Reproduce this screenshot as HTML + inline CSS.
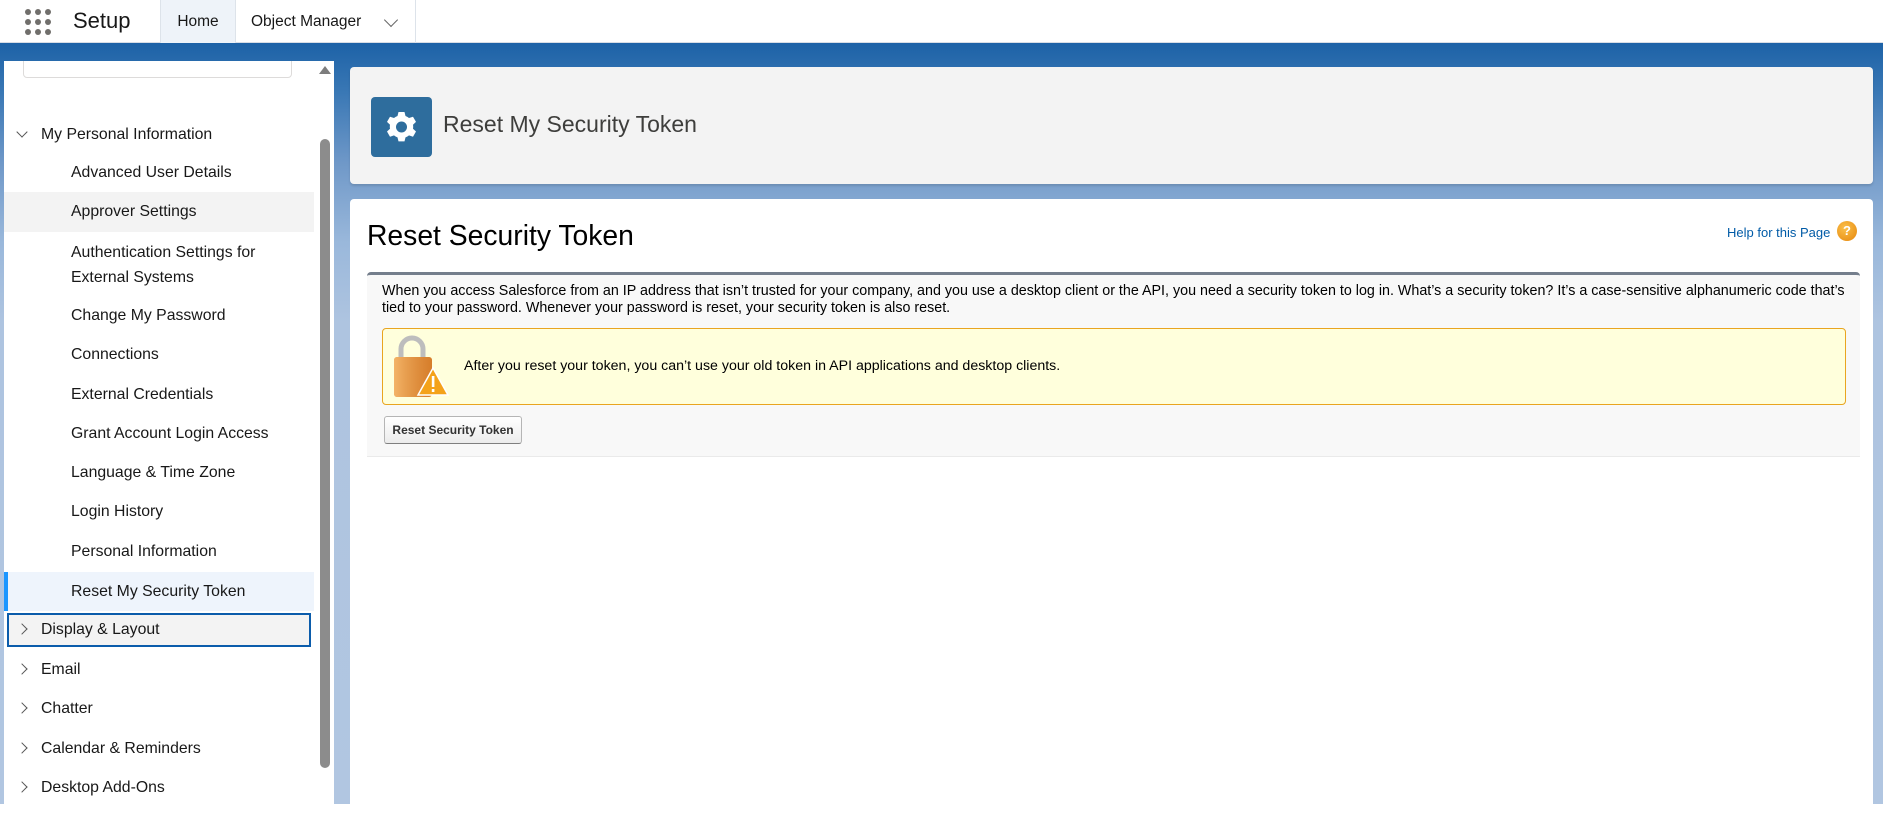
<!DOCTYPE html>
<html><head><meta charset="utf-8"><style>
*{box-sizing:border-box;margin:0;padding:0}
body{width:1883px;height:804px;overflow:hidden;position:relative;font-family:"Liberation Sans",Arial,sans-serif;background:#fff}
.top{position:absolute;left:0;top:0;width:1883px;height:43px;background:#fff;border-bottom:1px solid #d8dde6}
.bg{position:absolute;left:0;top:43px;width:1883px;height:761px;background:linear-gradient(180deg,#1d62a7 0px,#3a78b5 50px,#6f98c8 120px,#9ab8db 200px,#aec4e0 280px,#b1c6e1 761px)}
.side{position:absolute;left:4px;top:61px;width:311px;height:743px;background:#fff;overflow:hidden}
.sb{position:absolute;left:314px;top:61px;width:20px;height:743px;background:#fff}
.thumb{position:absolute;left:320px;top:139px;width:10px;height:629px;background:#8c8c8c;border-radius:5px}
.it{position:absolute;left:0;width:311px;font-size:15.8px;color:#181818;font-family:"Liberation Sans","DejaVu Sans",sans-serif}
.sub{padding-left:67px}
.lvl{padding-left:37px}
.chev{position:absolute;left:14px;top:50%;margin-top:-5px;width:8px;height:8px;border-right:1.5px solid #555;border-bottom:1.5px solid #555;transform:rotate(-45deg)}
.chev.dn{transform:rotate(45deg);margin-top:-7px}
.card{position:absolute;left:350px;width:1523px;border-radius:4px}
</style></head><body>
<div class="top">
 <svg style="position:absolute;left:24px;top:8px" width="28" height="28" viewBox="0 0 28 28" fill="#706e6b"><circle cx="4" cy="4" r="3"/><circle cx="14" cy="4" r="3"/><circle cx="24" cy="4" r="3"/><circle cx="4" cy="14" r="3"/><circle cx="14" cy="14" r="3"/><circle cx="24" cy="14" r="3"/><circle cx="4" cy="24" r="3"/><circle cx="14" cy="24" r="3"/><circle cx="24" cy="24" r="3"/></svg>
 <div style="position:absolute;left:73px;top:8px;font-size:22px;color:#181818;font-family:'Liberation Sans',sans-serif">Setup</div>
 <div style="position:absolute;left:160px;top:0;width:76px;height:43px;background:#eef3f9;border-left:1px solid #dde3ea;border-right:1px solid #dde3ea;font-size:15.5px;line-height:43px;text-align:center;color:#181818">Home</div>
 <div style="position:absolute;left:236px;top:0;width:180px;height:43px;border-right:1px solid #dde3ea;font-size:15.5px;line-height:43px;padding-left:15px;color:#181818">Object Manager</div>
 <div style="position:absolute;left:386px;top:15px;width:10px;height:10px;border-right:1.5px solid #666;border-bottom:1.5px solid #666;transform:rotate(45deg)"></div>
</div>
<div class="bg"></div>
<div class="side">
 <div style="position:absolute;left:19px;top:-10px;width:269px;height:27px;border:1px solid #dddbda;border-radius:4px"></div>
 <div class="it lvl" style="top:62px;height:24px;line-height:24px"><span class="chev dn"></span>My Personal Information</div>
 <div class="it sub" style="top:100px;height:24px;line-height:24px">Advanced User Details</div>
 <div class="it sub" style="top:131px;height:40px;line-height:40px;background:#f3f3f3">Approver Settings</div>
 <div class="it sub" style="top:179px;line-height:25px">Authentication Settings for<br>External Systems</div>
 <div class="it sub" style="top:243px;height:24px;line-height:24px">Change My Password</div>
 <div class="it sub" style="top:282px;height:24px;line-height:24px">Connections</div>
 <div class="it sub" style="top:322px;height:24px;line-height:24px">External Credentials</div>
 <div class="it sub" style="top:361px;height:24px;line-height:24px">Grant Account Login Access</div>
 <div class="it sub" style="top:400px;height:24px;line-height:24px">Language &amp; Time Zone</div>
 <div class="it sub" style="top:439px;height:24px;line-height:24px">Login History</div>
 <div class="it sub" style="top:479px;height:24px;line-height:24px">Personal Information</div>
 <div class="it sub" style="top:511px;height:39px;line-height:39px;background:#eef4fc;border-left:4px solid #1b96ff;padding-left:63px">Reset My Security Token</div>
 <div class="it lvl" style="left:3px;width:304px;top:552px;height:34px;line-height:30px;border:2px solid #0b5cab;background:#f3f3f3;padding-left:32px"><span class="chev" style="left:9px"></span>Display &amp; Layout</div>
 <div class="it lvl" style="top:597px;height:24px;line-height:24px"><span class="chev"></span>Email</div>
 <div class="it lvl" style="top:636px;height:24px;line-height:24px"><span class="chev"></span>Chatter</div>
 <div class="it lvl" style="top:676px;height:24px;line-height:24px"><span class="chev"></span>Calendar &amp; Reminders</div>
 <div class="it lvl" style="top:715px;height:24px;line-height:24px"><span class="chev"></span>Desktop Add-Ons</div>
</div>
<div class="sb"></div>
<div style="position:absolute;left:319px;top:66px;width:0;height:0;border-left:6px solid transparent;border-right:6px solid transparent;border-bottom:8px solid #7d7d7d"></div>
<div class="thumb"></div>

<div class="card" style="top:67px;height:117px;background:#f3f3f3;box-shadow:0 2px 2px rgba(0,0,0,.12)">
 <div style="position:absolute;left:21px;top:30px;width:61px;height:60px;background:#2e6d9d;border-radius:4px">
  <svg width="61" height="60" viewBox="0 0 61 60"><g transform="translate(30.5 30)" fill="#fff"><path d="M-3,-15 h6 l1,4 a11,11 0 0 1 3.5,2 l4,-1.3 3,5.2 -3,2.8 a11,11 0 0 1 0,4 l3,2.8 -3,5.2 -4,-1.3 a11,11 0 0 1 -3.5,2 l-1,4 h-6 l-1,-4 a11,11 0 0 1 -3.5,-2 l-4,1.3 -3,-5.2 3,-2.8 a11,11 0 0 1 0,-4 l-3,-2.8 3,-5.2 4,1.3 a11,11 0 0 1 3.5,-2z"/><circle r="5.5" fill="#2e6d9d"/></g></svg>
 </div>
 <div style="position:absolute;left:93px;top:44px;font-size:23px;color:#3e3e3c;font-family:'Liberation Sans',sans-serif">Reset My Security Token</div>
</div>

<div class="card" style="top:199px;height:620px;background:#fff">
 <div style="position:absolute;left:17px;top:20px;font-size:28.3px;color:#000;font-family:'Liberation Sans',Arial,sans-serif">Reset Security Token</div>
 <div style="position:absolute;left:1377px;top:26px;font-size:13px;color:#015ba7">Help for this Page</div>
 <div style="position:absolute;left:1487px;top:22px;width:20px;height:20px;border-radius:50%;background:radial-gradient(circle at 40% 35%,#fbc04a,#e5860c);color:#fff;font-size:13px;font-weight:bold;text-align:center;line-height:20px">?</div>
 <div style="position:absolute;left:17px;top:73px;width:1493px;height:185px;background:#f8f8f8;border-top:3px solid #747e8c;border-radius:4px 4px 0 0;border-bottom:1px solid #eaeaea">
  <div style="position:absolute;left:15px;top:8px;width:1470px;font-size:14.3px;line-height:17px;color:#000">When you access Salesforce from an IP address that isn’t trusted for your company, and you use a desktop client or the API, you need a security token to log in. What’s a security token? It’s a case-sensitive alphanumeric code that’s tied to your password. Whenever your password is reset, your security token is also reset.</div>
  <div style="position:absolute;left:15px;top:53px;width:1464px;height:77px;background:#ffffdc;border:1px solid #e9a520;border-radius:4px">
   <svg style="position:absolute;left:8px;top:6px" width="60" height="64" viewBox="0 0 60 64">
    <path d="M10 24 V14 a11 11 0 0 1 22 0 V24" fill="none" stroke="#bdbdbd" stroke-width="5"/>
    <rect x="3" y="22" width="38" height="40" rx="3" fill="#e8913a"/>
    <rect x="3" y="22" width="38" height="40" rx="3" fill="url(#g)"/>
    <defs><linearGradient id="g" x1="0" x2="1"><stop offset="0" stop-color="#f8c27a" stop-opacity=".7"/><stop offset="1" stop-color="#c46a1b" stop-opacity=".5"/></linearGradient></defs>
    <path d="M42 33 L57 60 H27 Z" fill="#f4a21a" stroke="#fff" stroke-width="1.5"/>
    <rect x="40.8" y="41" width="2.6" height="11" fill="#fff"/><rect x="40.8" y="54" width="2.6" height="3" fill="#fff"/>
   </svg>
   <div style="position:absolute;left:81px;top:29px;font-size:14.2px;color:#000">After you reset your token, you can’t use your old token in API applications and desktop clients.</div>
  </div>
  <div style="position:absolute;left:17px;top:141px;width:138px;height:28px;border:1px solid #b5b5b5;border-bottom-color:#7f7f7f;border-radius:3px;background:linear-gradient(#fff,#ececec);font-size:12px;font-weight:bold;line-height:26px;text-align:center;color:#333">Reset Security Token</div>
 </div>
</div>
</body></html>
